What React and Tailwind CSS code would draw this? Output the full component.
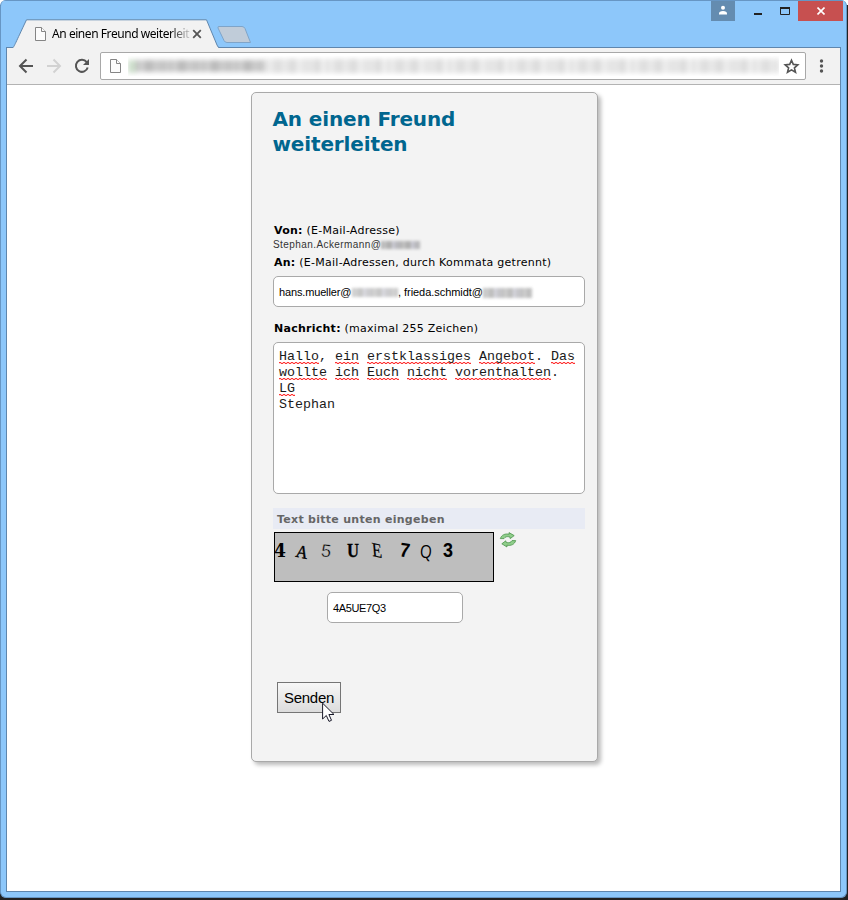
import React from "react";

function PageIcon() {
  return (
    <svg width="13" height="16" viewBox="0 0 13 16" className="shrink-0" fill="#fcfcfc" stroke="#858585" strokeWidth="1">
      <path d="M1.5 1.5H7.5L11.5 5.5V14.5H1.5Z" />
      <path d="M7.5 1.5V5.5H11.5" />
    </svg>
  );
}

function Redacted({ className }) {
  return <span className={`block shrink-0 bg-[repeating-linear-gradient(90deg,#b4b4b4_0_3px,#c8c8c8_3px_5px,#b0b0b0_5px_11px,#cacad4_11px_14px,#b8b8bc_14px_19px)] blur-[1.5px] ${className}`} />;
}

function TitleBar() {
  return (
    <div className="flex h-[47px] items-start border-t border-[#6796c4]">
      <div className="relative ml-[12px] mt-[18px] h-[29px] w-[206px]">
        <svg className="absolute left-0 top-0" width="206" height="29" viewBox="0 0 206 29">
          <path d="M0 29 C1.5 27 2 25 13.5 .8 H193.5 L204 26 Q205 28.5 206 29Z" fill="#f2f2f2" />
          <path d="M0 28.5 C1.5 27 2 25 13.5 .8 H193.5 L204 26 Q205 28.5 206 28.5" fill="none" stroke="#5f86ad" />
        </svg>
        <div className="relative flex h-[29px] items-center pl-[21px]">
          <PageIcon />
          <span className="ml-[5px] w-[138px] whitespace-nowrap font-['Noto_Sans','Open_Sans',sans-serif] text-[12px] leading-[18px] tracking-[-0.44px] text-black [mask-image:linear-gradient(90deg,#000_118px,transparent_141px)]">
            An einen Freund weiterleit
          </span>
          <svg width="10" height="10" viewBox="0 0 10 10" className="ml-[2px] shrink-0" stroke="#555" strokeWidth="1.8">
            <path d="M1.2 1.2L8.8 8.8M8.8 1.2L1.2 8.8" />
          </svg>
        </div>
      </div>
      <svg className="-ml-[2px] mt-[25px]" width="36" height="18" viewBox="0 0 36 18">
        <path d="M2 .5H25Q27 .5 28 2.5L33.5 16.5H10Q8 16.5 7 14.5L1 2Q.5 .5 2 .5Z" fill="#c0ccd9" stroke="#7fa4c8" />
      </svg>
      <div className="ml-auto mr-[3px] flex h-[20px]">
        <div className="flex w-6 justify-center bg-[#648cb0] pt-[4px]">
          <svg width="10" height="11" viewBox="0 0 10 11" fill="#fff">
            <circle cx="5" cy="2.8" r="2" />
            <path d="M1 9.5V8.5Q1 6 5 6T9 8.5V9.5Z" />
          </svg>
        </div>
        <svg width="63" height="20" viewBox="0 0 63 20" fill="none" stroke="#222">
          <path d="M19 13H27" strokeWidth="2" />
          <path d="M45.5 7V13.5H54.5V7" />
          <path d="M45 7H55" strokeWidth="2" />
        </svg>
        <div className="flex w-[45px] items-center justify-center bg-[#c75050]">
          <svg width="8" height="8" viewBox="0 0 8 8" stroke="#fff" strokeWidth="1.6">
            <path d="M.5 .5L7.5 7.5M7.5 .5L.5 7.5" />
          </svg>
        </div>
      </div>
    </div>
  );
}

function Toolbar() {
  return (
    <div className="flex h-[37px] shrink-0 border-b border-[#b3b3b3] bg-[#f2f2f2] pt-[4px]">
      <svg width="93" height="28" viewBox="0 0 93 28" fill="none" strokeWidth="2" className="shrink-0">
        <path d="M26 14H13M19.5 7.5L13 14L19.5 20.5" stroke="#555" />
        <path d="M40 14H53M46.5 7.5L53 14L46.5 20.5" stroke="#d2d2d2" />
        <path d="M79.7 10.2A6 6 0 1 0 80.7 15.5" stroke="#555" />
        <path d="M82 7V13H76Z" fill="#555" />
      </svg>
      <div className="flex h-7 w-[706px] shrink-0 items-center overflow-hidden rounded-[2px] border border-[#a8a8a8] bg-white">
        <div className="ml-[8px]"><PageIcon /></div>
        <div className="ml-[6px] flex h-[20px] w-[651px] items-center overflow-hidden">
          <div className="flex items-center opacity-75 blur-[2.5px]">
            <span className="h-[13px] w-[8px] bg-[#bcd3ba]" />
            <span className="h-[12px] w-[128px] bg-[repeating-linear-gradient(90deg,#aaa_0_4px,#c8c8c8_4px_8px,#a4a4a4_8px_17px,#bbb_17px_23px,#b0b0b0_23px_31px,#ccc_31px_33px)]" />
            <span className="h-[14px] w-[515px] bg-[repeating-linear-gradient(90deg,#dadada_0_5px,#e8e8e8_5px_9px,#d4d4d4_9px_18px,#e2e2e2_18px_24px,#d2d2d2_24px_33px,#ececec_33px_37px,#dcdcdc_37px_51px,#d0d0d0_51px_57px,#eee_57px_61px)]" />
          </div>
        </div>
        <svg width="17" height="17" viewBox="0 0 17 17" className="ml-[4px] shrink-0" fill="none" stroke="#555" strokeWidth="1.6">
          <path d="M8.5 2.2L10.3 6.4L14.8 6.8L11.4 9.8L12.5 14.3L8.5 11.9L4.5 14.3L5.6 9.8L2.2 6.8L6.7 6.4Z" />
        </svg>
      </div>
      <svg width="30" height="28" viewBox="0 0 30 28" fill="#555">
        <circle cx="15.5" cy="9" r="1.7" /><circle cx="15.5" cy="14" r="1.7" /><circle cx="15.5" cy="19" r="1.7" />
      </svg>
    </div>
  );
}

// The spell-check mark is two rows of red dashes, offset by half a period.
function Misspelled({ children }) {
  return (
    <span className="inline-block h-[16px] bg-[linear-gradient(90deg,#f33_2px,#fcc_2px),linear-gradient(90deg,#fcc_2px,#f33_2px)] bg-[length:4px_1px,4px_1px] bg-[position:0_13px,0_14px] bg-repeat-x align-top leading-[16px]">
      {children}
    </span>
  );
}

function Message() {
  return (
    <div className="mt-[6px] h-[152px] w-[312px] whitespace-nowrap rounded-[5px] border border-[#a9a9a9] bg-white pl-[5px] pt-[6px] font-['Liberation_Mono',monospace] text-[13.33px] leading-[16px] text-[#1a1a1a]">
      <div className="h-[16px]"><Misspelled>Hallo</Misspelled>, <Misspelled>ein</Misspelled> <Misspelled>erstklassiges</Misspelled> <Misspelled>Angebot</Misspelled>. <Misspelled>Das</Misspelled></div>
      <div className="h-[16px]"><Misspelled>wollte</Misspelled> <Misspelled>ich</Misspelled> <Misspelled>Euch</Misspelled> <Misspelled>nicht</Misspelled> <Misspelled>vorenthalten</Misspelled>.</div>
      <div className="h-[16px]"><Misspelled>LG</Misspelled></div>
      <div className="h-[16px]">Stephan</div>
    </div>
  );
}

function Captcha() {
  return (
    <svg width="220" height="50" viewBox="0 0 220 50">
      <rect x=".5" y=".5" width="219" height="49" fill="#bebebe" stroke="#000" />
      <g fill="#000">
        <text x="0" y="25" fontFamily="DejaVu Serif" fontWeight="bold" fontSize="19" textLength="12" lengthAdjust="spacingAndGlyphs">4</text>
        <text x="22" y="26" fontFamily="Liberation Serif" fontSize="18" textLength="12" lengthAdjust="spacingAndGlyphs" transform="rotate(12 28 20)" stroke="#000" strokeWidth=".4">A</text>
        <text x="47" y="25" fontFamily="Liberation Sans" fontSize="18" textLength="10" lengthAdjust="spacingAndGlyphs" transform="rotate(7 52 20)" stroke="#bebebe" strokeWidth=".4">5</text>
        <text x="73" y="25" fontFamily="Liberation Serif" fontWeight="bold" fontSize="19" textLength="12" lengthAdjust="spacingAndGlyphs" stroke="#000" strokeWidth=".3">U</text>
        <text x="98" y="25" fontFamily="Liberation Serif" fontSize="20" textLength="10" lengthAdjust="spacingAndGlyphs" transform="translate(103 19) skewY(12) skewX(5) translate(-103 -19)" stroke="#000" strokeWidth=".2">E</text>
        <text x="126" y="25" fontFamily="Liberation Sans" fontWeight="bold" fontSize="20" textLength="10" lengthAdjust="spacingAndGlyphs" transform="rotate(8 131 18)">7</text>
        <text x="146" y="26" fontFamily="Open Sans" fontSize="18" textLength="12" lengthAdjust="spacingAndGlyphs" transform="rotate(4 152 18)">Q</text>
        <text x="169" y="25" fontFamily="Liberation Sans" fontWeight="bold" fontSize="20" textLength="10" lengthAdjust="spacingAndGlyphs">3</text>
      </g>
    </svg>
  );
}

function RefreshIcon() {
  return (
    <svg width="18" height="16" viewBox="0 0 18 16" className="ml-[5px]" fill="#8fce8a" stroke="#4a934a" strokeWidth=".8">
      <path d="M1.3 6.6C2.6 2.8 6 1.4 10.2 2.2L10 .6L15.2 3.6L11.2 6.6L10.8 4.9C8 4.2 6 4.8 5 6.6Z" />
      <path d="M16.7 8.6C15.4 12.6 12 14 7.8 13.2L8 15L2.8 11.8L6.8 8.8L7.2 10.5C10 11.2 12 10.5 13 8.6Z" />
    </svg>
  );
}

const labelText = "h-[14px] pl-px whitespace-nowrap font-['DejaVu_Sans',sans-serif] text-[11px] leading-[14px] tracking-[0.26px] text-black";

function ForwardForm() {
  return (
    <div className="ml-[244px] mt-[7px] flex h-[670px] w-[347px] flex-col rounded-[5px] border border-[#a9a9a9] bg-[#f3f3f3] pl-[21px] shadow-[3px_3px_4px_#bbb]">
      <h1 className="-ml-[0.5px] mt-[14px] h-[50px] whitespace-nowrap font-['DejaVu_Sans',sans-serif] text-[20px] font-bold leading-[25px] tracking-[-0.13px] text-[#00668f]">An einen Freund<br />weiterleiten</h1>
      <div className={`mt-[67px] ${labelText}`}><b>Von:</b> (E-Mail-Adresse)</div>
      <div className="flex h-[14px] items-center font-['Liberation_Sans',sans-serif] text-[10px] leading-[14px] tracking-[0.42px] text-[#333]">
        <span className="w-[108px] whitespace-nowrap">Stephan.Ackermann@</span>
        <Redacted className="h-[8px] w-[39px]" />
      </div>
      <div className={`mt-[4px] ${labelText}`}><b>An:</b> (E-Mail-Adressen, durch Kommata getrennt)</div>
      <div className="mt-[6px] flex h-[31px] w-[312px] items-center rounded-[5px] border border-[#a9a9a9] bg-white pl-[5px] pt-[2px] font-['Liberation_Sans',sans-serif] text-[11px] text-black">
        <span className="w-[73px] whitespace-nowrap tracking-[-0.15px]">hans.mueller@</span>
        <Redacted className="h-[9px] w-[46px] opacity-70" />
        <span className="w-[85px] whitespace-pre tracking-[-0.05px]">, frieda.schmidt@</span>
        <Redacted className="h-[10px] w-[49px] opacity-80" />
      </div>
      <div className={`mt-[15px] ${labelText}`}><b>Nachricht:</b> (maximal 255 Zeichen)</div>
      <Message />
      <div className="mt-[14px] h-[21px] w-[312px] bg-[#e8ebf4] pl-[4px] pt-px font-['DejaVu_Sans',sans-serif] text-[11px] font-bold leading-[21px] tracking-[0.28px] text-[#666]">Text bitte unten eingeben</div>
      <div className="mt-[3px] flex h-[50px] pl-px"><Captcha /><RefreshIcon /></div>
      <div className="ml-[54px] mt-[10px] flex h-[31px] w-[136px] items-center rounded-[5px] border border-[#a9a9a9] bg-white pl-[5px] pt-[2px] font-['Liberation_Sans',sans-serif] text-[11px] tracking-[-0.36px] text-black">4A5UE7Q3</div>
      <div className="relative ml-[4px] mt-[59px] h-[31px] w-[64px]">
        <button className="h-[31px] w-[64px] border border-[#757575] bg-linear-to-b from-[#f7f7f7] to-[#dcdcdc] text-center font-['Liberation_Sans',sans-serif] text-[15px] leading-[29px] tracking-[-0.25px] text-black">Senden</button>
        <svg className="absolute left-[45px] top-[20px]" width="13" height="21" viewBox="0 0 13 21">
          <path d="M.6 1.2V17L4.3 13.5L7 19.4L9.5 18.3L6.9 12.5H12Z" fill="#fff" stroke="#181828" strokeWidth="1" />
        </svg>
      </div>
    </div>
  );
}

export default function App() {
  return (
    <div className="h-[900px] w-[848px] overflow-hidden bg-[linear-gradient(180deg,#fff_5px,#222_5px)]">
      <div className="h-[898px] w-[847px] overflow-hidden rounded-[6px] border-b border-l border-r border-[#6796c4] bg-[#8dc7fa]">
        <TitleBar />
        <div className="ml-[5px] flex h-[845px] w-[835px] flex-col border border-[#5f86ad] bg-white">
          <Toolbar />
          <ForwardForm />
        </div>
      </div>
    </div>
  );
}
